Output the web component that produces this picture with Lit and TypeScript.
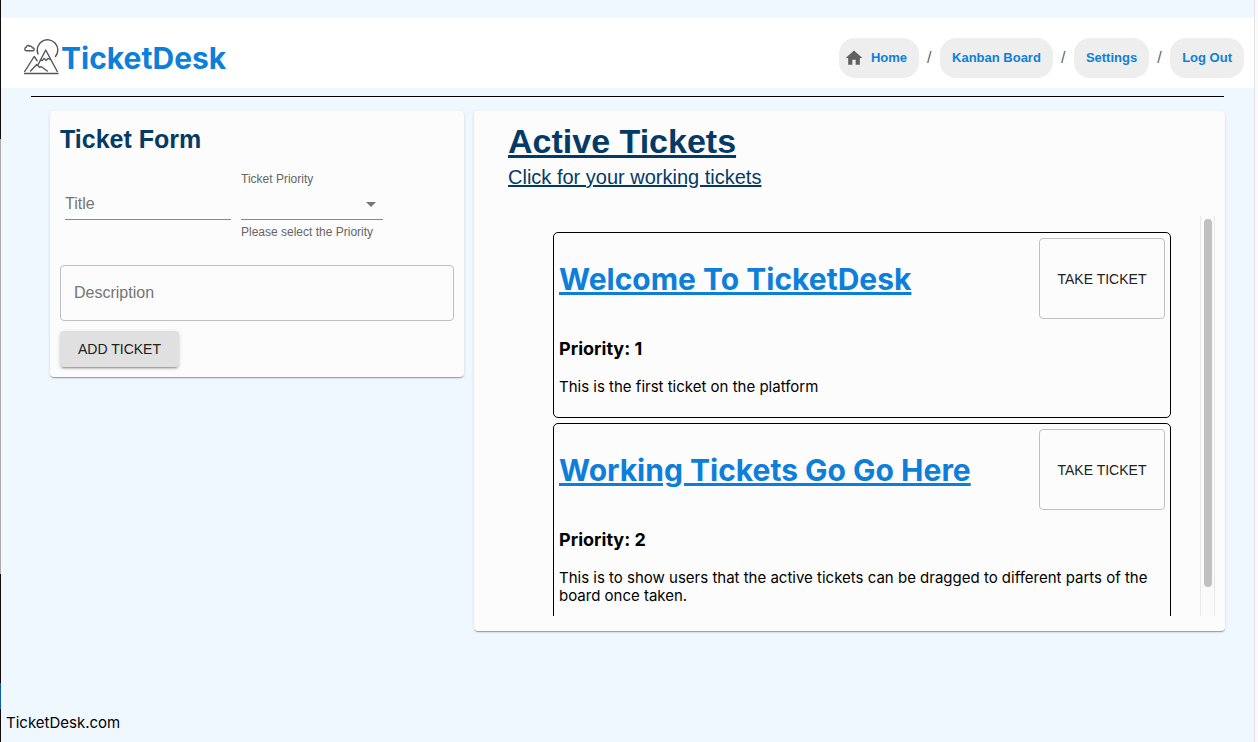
import { LitElement, html, css } from "lit";
import { customElement, property } from "lit/decorators.js";

const SANS = css`"Liberation Sans", Arial, Helvetica, sans-serif`;
const SYSTEM = css`Inter, "Noto Sans", sans-serif`;

@customElement("site-header")
class SiteHeader extends LitElement {
  static styles = css`
    :host {
      display: flex;
      align-items: center;
      justify-content: space-between;
      box-sizing: border-box;
      min-height: 70px;
      padding: 10px 10px 0 20px;
      background: #ffffff;
    }
    .brand {
      display: flex;
      align-items: center;
      color: #0d7fdb;
      text-decoration: none;
    }
    .logo {
      display: block;
      width: 40px;
      height: 40px;
    }
    .name {
      margin: 0;
      font: 700 30px/40px ${SYSTEM};
    }
    .crumbs {
      display: flex;
      align-items: center;
      margin: 0;
      padding: 0;
      list-style: none;
      font: 400 16px/24px ${SANS};
      color: #666666;
    }
    .item {
      display: flex;
      align-items: center;
    }
    .item + .item::before {
      content: "/";
      width: 5px;
      margin: 0 8px;
    }
    .chip {
      display: flex;
      align-items: center;
      gap: 7px;
      height: 40px;
      padding: 0 12px;
      border-radius: 16px;
      background: #eeeeee;
      color: #0d7fdb;
      font: 700 13px/20px ${SANS};
      text-decoration: none;
    }
    .chip.with-icon {
      padding-left: 5px;
    }
    .icon {
      width: 20px;
      height: 20px;
      fill: #616161;
    }
  `;

  render() {
    return html`
      <a class="brand" href="#">
        <svg class="logo" viewBox="0 0 40 40" fill="none" stroke="#555555" stroke-width="1.4" stroke-linejoin="round" stroke-linecap="round" aria-hidden="true">
          <path d="M17 16A10.300 10.300 0 1 1 34.500 18.500" />
          <path d="M5.500 12.800c-2.200-.2-2.400-3-.3-3.400 0-1.800 2.400-2.400 3.400-1.100 1.300-.5 2.500.3 2.700 1.500 2.500 0 2.500 3 .4 3z" />
          <path d="M3.700 33.500 13.200 18.500l3 4.300" />
          <path d="M17.200 26.500 24.700 12l11.600 21.500" />
          <path d="M19.500 22l2 .4 1.700-2 1.800 2 2-2 2.300 1" />
          <path d="M9.500 33l6.300-6.500 2.700 2.800 1.800-.6 6 4.300" />
          <path d="M3.500 35.500h33.500" />
        </svg>
        <h1 class="name">TicketDesk</h1>
      </a>
      <nav aria-label="Main">
        <ol class="crumbs">
          <li class="item">
            <a class="chip with-icon" href="#home">
              <svg class="icon" viewBox="0 0 24 24" aria-hidden="true"><path d="M10 20v-6h4v6h5v-8h3L12 3 2 12h3v8z" /></svg>
              Home
            </a>
          </li>
          <li class="item"><a class="chip" href="#kanban">Kanban Board</a></li>
          <li class="item"><a class="chip" href="#settings">Settings</a></li>
          <li class="item"><a class="chip" href="#logout">Log Out</a></li>
        </ol>
      </nav>
    `;
  }
}

@customElement("ticket-form")
class TicketForm extends LitElement {
  static styles = css`
    :host {
      display: block;
      font-family: ${SANS};
    }
    .heading {
      margin: 0 0 14px;
      color: #043b66;
      font-size: 25px;
      line-height: 36px;
    }
    .row {
      display: flex;
      align-items: flex-start;
      gap: 10px;
      padding: 0 5px;
    }
    .title,
    .select {
      box-sizing: border-box;
      height: 33px;
      border: 0;
      border-bottom: 1px solid #8a8a8a;
      border-radius: 0;
      padding: 2px 0 0;
      background: transparent;
      color: #212121;
      font: 400 16px/24px ${SANS};
      outline-offset: 2px;
    }
    .title {
      width: 166px;
      margin-top: 16px;
    }
    .title::placeholder,
    .description::placeholder {
      color: #757575;
      opacity: 1;
    }
    .priority {
      display: flex;
      flex-direction: column;
      width: 142px;
    }
    .label {
      color: #666666;
      font-size: 12px;
      line-height: 16px;
    }
    .picker {
      display: grid;
    }
    .select,
    .caret {
      grid-area: 1 / 1;
    }
    .select {
      width: 100%;
      appearance: none;
    }
    .caret {
      justify-self: end;
      align-self: center;
      width: 24px;
      height: 24px;
      fill: #757575;
      pointer-events: none;
    }
    .hint {
      margin-top: 3px;
      color: #666666;
      font-size: 12px;
      line-height: 18px;
      white-space: nowrap;
    }
    .description {
      display: block;
      box-sizing: border-box;
      width: 100%;
      height: 56px;
      margin: 24px 0 10px;
      padding: 0 13px;
      border: 1px solid #c0c0c0;
      border-radius: 4px;
      background: transparent;
      color: #212121;
      font: 400 16px/24px ${SANS};
    }
    .submit {
      display: block;
      height: 36px;
      min-width: 119px;
      padding: 0 16px;
      border: 0;
      border-radius: 4px;
      background: #e0e0e0;
      box-shadow:
        0 3px 1px -2px rgba(0, 0, 0, 0.2),
        0 2px 2px 0 rgba(0, 0, 0, 0.14),
        0 1px 5px 0 rgba(0, 0, 0, 0.12);
      color: #212121;
      font: 400 14px/24px ${SANS};
      cursor: pointer;
    }
  `;

  render() {
    return html`
      <form @submit=${(e: Event) => e.preventDefault()}>
        <h2 class="heading">Ticket Form</h2>
        <div class="row">
          <input class="title" type="text" placeholder="Title" aria-label="Title" />
          <div class="priority">
            <label class="label" for="priority">Ticket Priority</label>
            <div class="picker">
              <select class="select" id="priority" aria-describedby="hint">
                <option value=""></option>
                <option>1</option>
                <option>2</option>
                <option>3</option>
              </select>
              <svg class="caret" viewBox="0 0 24 24" aria-hidden="true"><path d="M7 10l5 5 5-5z" /></svg>
            </div>
            <span class="hint" id="hint">Please select the Priority</span>
          </div>
        </div>
        <input class="description" type="text" placeholder="Description" aria-label="Description" />
        <button class="submit" type="submit">ADD TICKET</button>
      </form>
    `;
  }
}

@customElement("ticket-card")
class TicketCard extends LitElement {
  @property() heading = "";
  @property({ type: Number }) priority = 1;
  @property() text = "";

  static styles = css`
    :host {
      display: block;
      padding: 5px;
      border: 1px solid #000000;
      border-radius: 5px;
      color: #000000;
      font: 400 15px/18px ${SYSTEM};
    }
    .top {
      display: flex;
      justify-content: space-between;
      min-height: 81px;
    }
    .link {
      align-self: center;
      color: #0d7fdb;
    }
    .heading {
      margin: 0;
      font-size: 30px;
      line-height: 40px;
    }
    .take {
      flex: none;
      width: 126px;
      border: 1px solid #c0c0c0;
      border-radius: 4px;
      padding: 0;
      background: transparent;
      color: #212121;
      font: 400 14px/24px ${SANS};
      cursor: pointer;
    }
    .priority {
      margin: 19px 0 18px;
      font-size: 18px;
      line-height: 22px;
    }
    .text {
      margin: 0 0 16px;
    }
  `;

  render() {
    return html`
      <div class="top">
        <a class="link" href="#ticket"><h2 class="heading">${this.heading}</h2></a>
        <button class="take" type="button">TAKE TICKET</button>
      </div>
      <h3 class="priority">Priority: ${this.priority}</h3>
      <p class="text">${this.text}</p>
    `;
  }
}

const TICKETS = [
  { heading: "Welcome To TicketDesk", priority: 1, text: "This is the first ticket on the platform" },
  {
    heading: "Working Tickets Go Go Here",
    priority: 2,
    text: "This is to show users that the active tickets can be dragged to different parts of the board once taken.",
  },
];

@customElement("active-tickets")
class ActiveTickets extends LitElement {
  static styles = css`
    :host {
      display: block;
      color: #043b66;
      font-family: ${SANS};
    }
    .heading {
      margin: 0;
      font-size: 34px;
      line-height: 42px;
      text-decoration: underline;
    }
    .working {
      display: inline-block;
      color: inherit;
      font-size: 20px;
      line-height: 30px;
    }
    .scroller {
      display: flex;
      height: 400px;
      margin-top: 24px;
    }
    .list {
      flex: 1;
      display: flex;
      flex-direction: column;
      gap: 5px;
      box-sizing: border-box;
      margin: 0;
      padding: 16px 29px 0 45px;
      overflow-y: auto;
      scrollbar-width: none;
      list-style: none;
    }
    .track {
      box-sizing: border-box;
      width: 15px;
      padding: 3px;
      border: 1px solid #e8e8e8;
      border-width: 0 1px;
      background: #fafafa;
    }
    .thumb {
      width: 8px;
      height: 368px;
      border-radius: 4px;
      background: #c1c1c1;
    }
  `;

  render() {
    return html`
      <h2 class="heading">Active Tickets</h2>
      <a class="working" href="#working">Click for your working tickets</a>
      <div class="scroller">
        <ul class="list">
          ${TICKETS.map(
            (t) => html`<li>
              <ticket-card .heading=${t.heading} .priority=${t.priority} .text=${t.text}></ticket-card>
            </li>`
          )}
        </ul>
        <div class="track"><div class="thumb"></div></div>
      </div>
    `;
  }
}

@customElement("app-root")
class AppRoot extends LitElement {
  static styles = css`
    :host {
      display: grid;
      grid-template-columns: 1px 1fr 4px;
      min-height: 100vh;
      background: #eff7ff;
    }
    .edge {
      background: linear-gradient(
        #120c0c 0 139px,
        #a9a9ae 139px 574px,
        #120c0c 574px 683px,
        #0f5fa8 683px 709px,
        #120c0c 709px
      );
    }
    .gutter {
      border-left: 1px solid #e4e4e4;
      background: #fafafa;
    }
    .page {
      display: flex;
      flex-direction: column;
      padding-top: 18px;
    }
    .rule {
      width: auto;
      height: 1px;
      margin: 8px 30px 14px;
      border: 0;
      background: #000000;
    }
    .columns {
      display: grid;
      grid-template-columns: 414fr 751fr;
      align-items: start;
      gap: 10px;
      padding: 0 29px 0 49px;
    }
    .card {
      border-radius: 4px;
      background: #fcfcfc;
      box-shadow:
        0 2px 1px -1px rgba(0, 0, 0, 0.2),
        0 1px 1px 0 rgba(0, 0, 0, 0.14),
        0 1px 3px 0 rgba(0, 0, 0, 0.12);
    }
    .form {
      padding: 10px;
    }
    .tickets {
      padding: 9px 10px 15px 34px;
    }
    .footer {
      margin-top: auto;
      padding: 0 5px 10px;
      color: #000000;
      font: 400 15px/18px ${SYSTEM};
    }
  `;

  render() {
    return html`
      <div class="edge"></div>
      <div class="page">
        <site-header></site-header>
        <hr class="rule" />
        <main class="columns">
          <ticket-form class="card form"></ticket-form>
          <active-tickets class="card tickets"></active-tickets>
        </main>
        <footer class="footer">TicketDesk.com</footer>
      </div>
      <div class="gutter"></div>
    `;
  }
}
